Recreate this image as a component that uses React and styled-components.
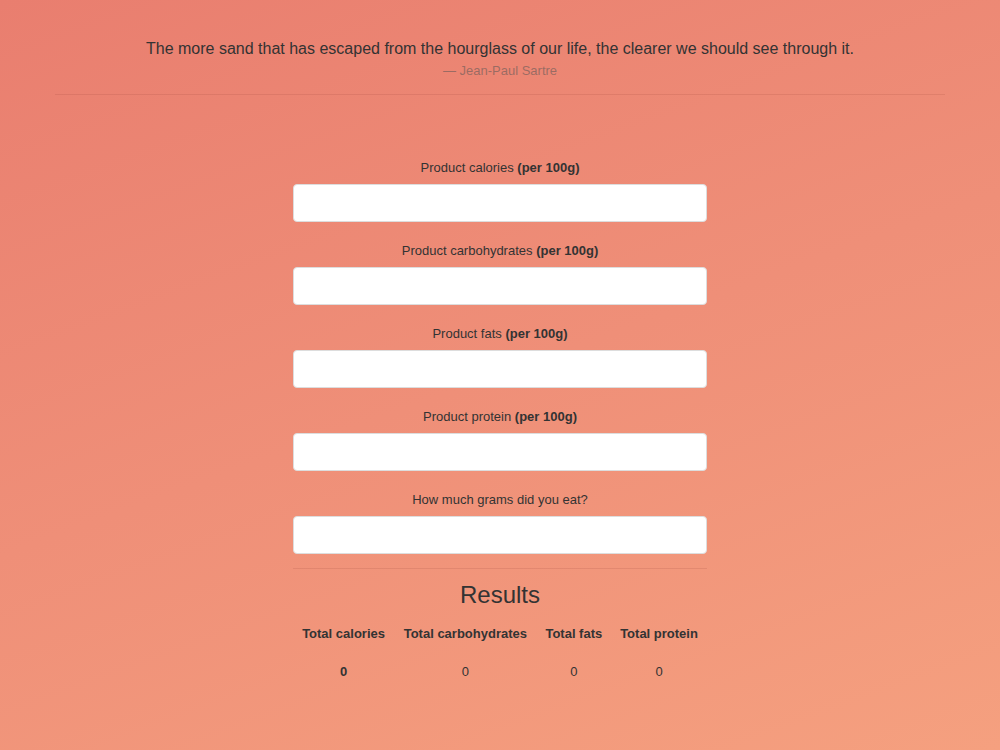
import React, { useState } from 'react';
import styled, { createGlobalStyle } from 'styled-components';

const GlobalStyle = createGlobalStyle`
    html, body {
        margin: 0;
        padding: 0;
        min-height: 100%;
    }
    body {
        font-family: "Liberation Sans", Arial, Helvetica, sans-serif;
        font-size: 13px;
        line-height: 1.42857;
        color: #333;
        background: linear-gradient(160deg, #e97e6f 0%, #ef8f78 50%, #f5a07f 100%);
        min-height: 750px;
    }
    * {
        box-sizing: border-box;
    }
`;

const Page = styled.div`
    min-height: 750px;
    padding: 0 55px;
`;

const Quote = styled.blockquote`
    margin: 0;
    padding: 38px 0 12px;
    text-align: center;
    border-bottom: 1px solid rgba(120, 40, 30, 0.12);
    p {
        margin: 0;
        font-size: 16px;
        line-height: 22px;
        color: #333;
    }
    footer {
        font-size: 13px;
        line-height: 22px;
        color: rgba(85, 85, 85, 0.55);
    }
`;

const Form = styled.form`
    width: 414px;
    margin: 63px auto 0;
`;

const Group = styled.div`
    margin-bottom: 19px;
    text-align: center;
    label {
        display: block;
        margin-bottom: 6px;
        line-height: 20px;
        color: #333;
    }
    b {
        font-weight: bold;
    }
`;

const Input = styled.input`
    display: block;
    width: 100%;
    height: 38px;
    padding: 6px 12px;
    font-size: 14px;
    font-family: inherit;
    border: 1px solid #ddd;
    border-radius: 4px;
    background: #fff;
    outline: none;
`;

const Divider = styled.hr`
    margin: -5px 0 11px;
    border: 0;
    border-top: 1px solid rgba(120, 40, 30, 0.12);
`;

const Heading = styled.h3`
    margin: 0 0 5px;
    font-size: 24px;
    font-weight: 500;
    line-height: 30px;
    text-align: center;
    color: #333;
`;

const Table = styled.table`
    width: 100%;
    border-collapse: collapse;
    th, td {
        padding: 9px 8px;
        text-align: center;
        line-height: 20px;
        font-size: 13px;
        color: #333;
    }
    thead th {
        font-weight: bold;
    }
`;

const fields = [
    { key: 'calories', label: 'Product calories', bold: '(per 100g)' },
    { key: 'carbs', label: 'Product carbohydrates', bold: '(per 100g)' },
    { key: 'fats', label: 'Product fats', bold: '(per 100g)' },
    { key: 'protein', label: 'Product protein', bold: '(per 100g)' },
    { key: 'grams', label: 'How much grams did you eat?' },
];

function App() {
    const [values, setValues] = useState({});

    const total = (key) => {
        const v = parseFloat(values[key]) || 0;
        const g = parseFloat(values.grams) || 0;
        return Math.round((v * g) / 100);
    };

    return (
        <Page>
            <GlobalStyle />
            <Quote>
                <p>The more sand that has escaped from the hourglass of our life, the clearer we should see through it.</p>
                <footer>— Jean-Paul Sartre</footer>
            </Quote>
            <Form onSubmit={(e) => e.preventDefault()}>
                {fields.map((f) => (
                    <Group key={f.key}>
                        <label htmlFor={f.key}>
                            {f.label} {f.bold && <b>{f.bold}</b>}
                        </label>
                        <Input
                            id={f.key}
                            type="number"
                            value={values[f.key] || ''}
                            onChange={(e) => setValues({ ...values, [f.key]: e.target.value })}
                        />
                    </Group>
                ))}
                <Divider />
                <Heading>Results</Heading>
                <Table>
                    <thead>
                        <tr>
                            <th>Total calories</th>
                            <th>Total carbohydrates</th>
                            <th>Total fats</th>
                            <th>Total protein</th>
                        </tr>
                    </thead>
                    <tbody>
                        <tr>
                            <th>{total('calories')}</th>
                            <td>{total('carbs')}</td>
                            <td>{total('fats')}</td>
                            <td>{total('protein')}</td>
                        </tr>
                    </tbody>
                </Table>
            </Form>
        </Page>
    );
}

export default App;
